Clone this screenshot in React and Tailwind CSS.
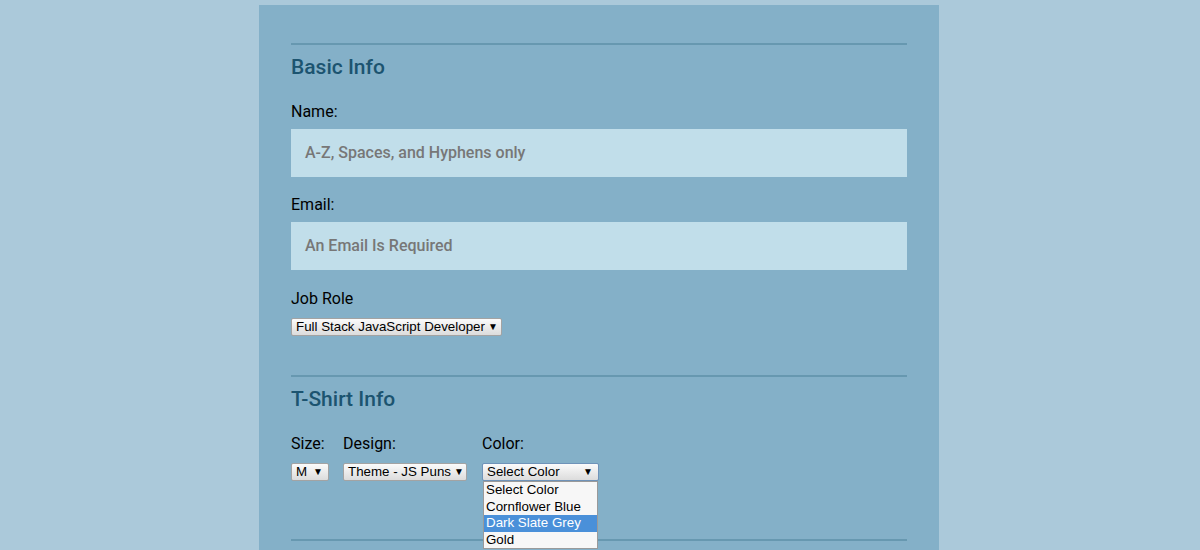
import React from 'react';

const roboto = { fontFamily: 'Roboto, "Noto Sans", sans-serif' };

function FakeSelect({ label, width, focused }) {
  return (
    <div
      className={`flex h-[18px] items-center justify-between rounded-[2px] border bg-gradient-to-b from-[#fbfbfb] to-[#dcdcdc] pl-[4px] pr-[5px] text-[13.33px] leading-none text-black ${
        focused ? 'border-[#6f93b9]' : 'border-[#a3a3a3]'
      } ${width}`}
      style={{ fontFamily: '"Liberation Sans", Arial, sans-serif' }}
    >
      <span className="whitespace-nowrap">{label}</span>
      <span className="ml-[3px] text-[10px]">▼</span>
    </div>
  );
}

export default function App() {
  const colors = ['Select Color', 'Cornflower Blue', 'Dark Slate Grey', 'Gold'];

  return (
    <div className="h-[550px] overflow-hidden bg-[#abc9da] pt-[5px]" style={roboto}>
      <div className="ml-[259px] h-[600px] w-[680px] bg-[#84b0c8] px-8 pt-[38px]">
        {/* Basic Info */}
        <div className="border-t-2 border-[#6798b0]" />
        <h2 className="mt-[9px] text-[21px] font-medium leading-[26px] text-[#1c5470]">Basic Info</h2>

        <label className="mt-[22px] block text-[16px] leading-[20px] text-black">Name:</label>
        <div className="mt-[7px] flex h-[48px] items-center bg-[#c1deea] px-[14px] text-[16px] font-medium text-[#777777]">
          A-Z, Spaces, and Hyphens only
        </div>

        <label className="mt-[18px] block text-[16px] leading-[20px] text-black">Email:</label>
        <div className="mt-[7px] flex h-[48px] items-center bg-[#c1deea] px-[14px] text-[16px] font-medium text-[#777777]">
          An Email Is Required
        </div>

        <label className="mt-[19px] block text-[16px] leading-[20px] text-black">Job Role</label>
        <div className="mt-[9px] flex">
          <FakeSelect label="Full Stack JavaScript Developer" width="w-[211px]" />
        </div>

        {/* T-Shirt Info */}
        <div className="mt-[39px] border-t-2 border-[#6798b0]" />
        <h2 className="mt-[9px] text-[21px] font-medium leading-[26px] text-[#1c5470]">T-Shirt Info</h2>

        <div className="mt-[22px] flex">
          <div className="mr-[14px] w-[38px]">
            <div className="text-[16px] leading-[20px] text-black">Size:</div>
            <div className="mt-[9px]">
              <FakeSelect label="M" width="w-[38px]" />
            </div>
          </div>
          <div className="mr-[15px] w-[124px]">
            <div className="text-[16px] leading-[20px] text-black">Design:</div>
            <div className="mt-[9px]">
              <FakeSelect label="Theme - JS Puns" width="w-[124px]" />
            </div>
          </div>
          <div className="relative w-[117px]">
            <div className="text-[16px] leading-[20px] text-black">Color:</div>
            <div className="mt-[9px]">
              <FakeSelect label="Select Color" width="w-[117px]" focused />
            </div>
            <ul
              className="absolute left-[1px] top-[47px] z-10 w-[115px] border border-[#9a9a9a] bg-[#f7f7f7] text-[13.33px] text-black"
              style={{ fontFamily: '"Liberation Sans", Arial, sans-serif' }}
            >
              {colors.map((c) => (
                <li
                  key={c}
                  className={`h-[16.6px] pl-[2px] leading-[16.6px] ${
                    c === 'Dark Slate Grey' ? 'bg-[#4a90d9] text-white' : ''
                  }`}
                >
                  {c}
                </li>
              ))}
            </ul>
          </div>
        </div>

        <div className="mt-[58px] border-t-2 border-[#6798b0]" />
      </div>
    </div>
  );
}
